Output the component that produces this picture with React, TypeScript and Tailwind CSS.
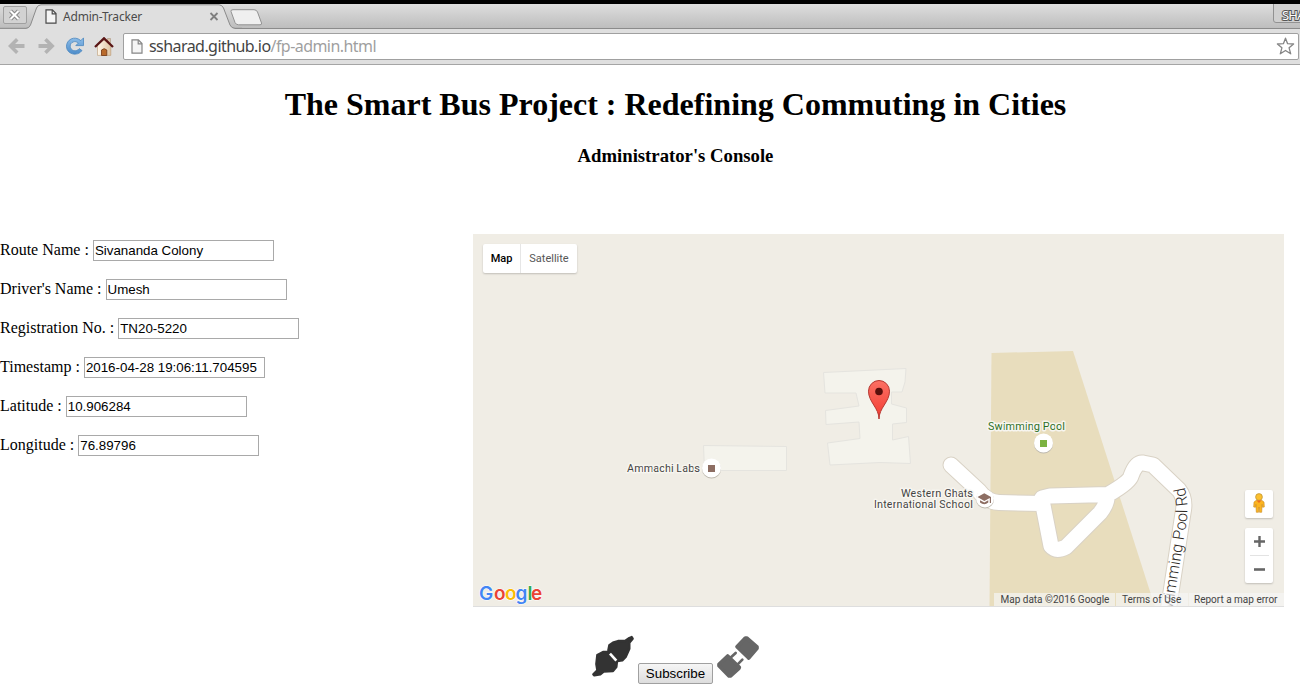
import React from "react";

const fields = [
  { label: "Route Name :", value: "Sivananda Colony" },
  { label: "Driver's Name :", value: "Umesh" },
  { label: "Registration No. :", value: "TN20-5220" },
  { label: "Timestamp :", value: "2016-04-28 19:06:11.704595" },
  { label: "Latitude :", value: "10.906284" },
  { label: "Longitude :", value: "76.89796" },
];

function PageIcon({ className, stroke }: { className: string; stroke: string }) {
  return (
    <svg className={className} viewBox="0 0 12 15" fill="none">
      <path d="M1 .9h6.4L11 4.6v9.5H1z" fill="#f5f5f5" stroke={stroke} strokeWidth="1.2" />
      <path d="M7.2 1v3.8H11" stroke={stroke} strokeWidth="1.2" />
    </svg>
  );
}

function TabStrip() {
  return (
    <div className="relative h-[25px] bg-gradient-to-b from-[#dedede] to-[#bcbcbc]">
      <svg className="absolute inset-0" width="1300" height="25" viewBox="0 4 1300 25">
        <path d="M0 28.5H1300" stroke="#8b8b8b" />
        <path
          d="M0 29V28.5H26Q29 28.5 30.5 25L36.5 8Q38 4.8 41 4.8H219Q222 4.8 223.5 8L230 25Q231.5 28.5 235 28.5V30H26Z"
          fill="#dfdfdf"
        />
        <path
          d="M0 28.3H26Q29 28.3 30.5 25L36.5 8Q38 4.8 41 4.8H219Q222 4.8 223.5 8L230 25Q231.5 28.3 235 28.3H242"
          fill="none"
          stroke="#8b8b8b"
        />
        <path
          d="M233 9.7H254Q256.5 9.7 257.5 12L261.5 23Q262 24.8 260 24.8H238.5Q236 24.8 235 22.5L231 11.5Q230.5 9.7 233 9.7Z"
          fill="#efefef"
          stroke="#929292"
        />
        <rect x="3.5" y="6.5" width="23" height="17" rx="1.5" fill="#d2d2d2" stroke="#a0a0a0" />
        <path d="M10.500 11l8 8m0-8l-8 8" stroke="#888" strokeWidth="4" />
        <path d="M10.500 11l8 8m0-8l-8 8" stroke="#fff" strokeWidth="2" />
        <path d="M1273.500 4V20Q1273.500 22.500 1276 22.500H1301V4" fill="#d0d0d0" stroke="#929292" />
      </svg>
      <div className="relative flex h-[25px] items-center font-['Noto_Sans','Open_Sans',sans-serif] text-[12px] text-[#4b4b4b]">
        <PageIcon className="ml-[45px] h-[15px] w-[12px]" stroke="#4a4a4a" />
        <span className="ml-[6px] w-[146px] text-[12px] tracking-[-0.2px]">Admin-Tracker</span>
        <svg className="h-[9px] w-[10px]" viewBox="0 0 10 9">
          <path d="M1.500 1l7 7m0-7l-7 7" stroke="#7f7f7f" strokeWidth="1.800" />
        </svg>
        <span className="mb-[3px] ml-auto w-[19px] overflow-hidden whitespace-nowrap pl-px text-[13px] leading-[18px] tracking-[-0.9px] text-white [-webkit-text-stroke:2px_#555] [paint-order:stroke_fill]">
          SHA
        </span>
      </div>
    </div>
  );
}

function Toolbar() {
  return (
    <div className="flex h-[36px] items-center border-b border-[#a5a5a5] bg-[#dfdfdf] pl-[7px] pr-px">
      <svg className="h-[19px] w-[112px] shrink-0" viewBox="7 37 112 19">
        <defs>
          <linearGradient id="reload" x2="0" y2="1">
            <stop stopColor="#8cbce8" />
            <stop offset="1" stopColor="#4e8dca" />
          </linearGradient>
          <linearGradient id="wall" x2="1" y2="0">
            <stop stopColor="#fff7ea" />
            <stop offset="1" stopColor="#dfc5a3" />
          </linearGradient>
        </defs>
        <path d="M8 46l8-8 2.500 2.500-3.500 3.500h9.500v4H15l3.500 3.500L16 54z" fill="#b3b3b3" />
        <path d="M54.700 46l-8-8-2.500 2.500 3.500 3.500h-9.200v4h9.200l-3.500 3.500 2.500 2.500z" fill="#b3b3b3" />
        <path
          d="M80.800 40.600C74.500 35 66 39.800 66.500 46.800C67 54.500 77.500 56.800 82 50.600L79.300 48.600C76.500 52.500 70.300 50.800 70.200 46.200C70.200 42 75.500 40 78.300 43.100L75.800 45.600H83.500V37.900Z"
          fill="url(#reload)"
          stroke="#4a86bf"
          strokeWidth=".8"
        />
        <path d="M107.500 38.500h3v6h-3z" fill="#d8c3aa" stroke="#a38a72" strokeWidth=".5" />
        <path d="M97.500 45l6.500-6 6.800 6v10.400H97.500z" fill="url(#wall)" stroke="#b99a75" strokeWidth=".6" />
        <path d="M101.500 55.500V50q2.700-2.700 5.300 0v5.500z" fill="#b96a2b" stroke="#713715" strokeWidth=".8" />
        <path d="M95 47l9-8.700 9 8.700" fill="none" stroke="#5a1616" strokeWidth="2.300" />
      </svg>
      <div className="ml-[4px] mt-[-1px] flex h-[27px] flex-1 items-center rounded-[2px] border border-[#a0a0a0] bg-white font-['Noto_Sans','Open_Sans',sans-serif] text-[16px] text-[#444]">
        <PageIcon className="ml-[7px] h-[15px] w-[12px]" stroke="#858585" />
        <span className="ml-[6px] whitespace-nowrap tracking-[-0.56px]">
          ssharad.github.io<span className="text-[#9f9f9f]">/fp-admin.html</span>
        </span>
        <svg className="ml-auto mr-[3px] h-[19px] w-[19px]" viewBox="0 0 19 19">
          <path
            d="M9.500 1.200l2.100 5.500 6 .3-4.500 3.800 1.600 6-5.200-3.300-5.200 3.300 1.600-6L1.400 7l6-.3z"
            fill="#fff"
            stroke="#858585"
            strokeWidth="1.300"
            strokeLinejoin="round"
          />
        </svg>
      </div>
    </div>
  );
}

const roads =
  "M951 465L979 491Q987 502 999 502.500L1042 503.500M1042 498L1050 496L1108 494.500Q1130 482 1131 476Q1136 462 1143 463L1153 465L1179 490Q1186 499 1183 513L1168 612M1042 500L1051 546Q1056 552 1066 547L1100 513Q1108 503 1107 495";

function MapDrawing() {
  return (
    <svg
      className="block h-[373px] w-[811px] font-['Roboto',sans-serif]"
      viewBox="473 234 811 373"
      fontSize="11"
      fill="#444"
    >
      <defs>
        <linearGradient id="pin" x2="0" y2="1">
          <stop stopColor="#fb7064" />
          <stop offset="1" stopColor="#f33b31" />
        </linearGradient>
        <path id="pool-road" d="M1166 650L1175 594L1185 532Q1190 508 1184.500 487" />
      </defs>
      <rect x="473" y="234" width="811" height="373" fill="#f0ede5" />
      <path d="M991.500 353L1073 351L1155 607H989.500z" fill="#e8ddbd" />
      <g fill="#f4f3ec" stroke="#e5e4df">
        <path d="M823.500 372.500L906 368.500L905 382L902 392H891.500V404L906.500 408V422.500L892.500 424V440L908.500 436.500L910.500 463.500L880 462.500L830 465L827.500 443L860 438.500L859 422L826 424.500L825.500 410.500L859 406L856 393H825z" />
        <path d="M703.500 445.500L786.500 446.500V470.500H704.500z" />
      </g>
      <g fill="none" strokeLinejoin="round" strokeLinecap="round">
        <path d={roads} stroke="#d9d2c5" strokeWidth="17" />
        <path d={roads} stroke="#fff" strokeWidth="15" />
      </g>
      <g stroke="#f7f5ef" strokeWidth="3" paintOrder="stroke" strokeLinejoin="round">
        <text x="627" y="472" textLength="73">Ammachi Labs</text>
        <text x="988" y="430" textLength="77" fill="#2d701e">Swimming Pool</text>
        <text x="901" y="497" textLength="72">Western Ghats</text>
        <text x="874" y="508" textLength="99">International School</text>
      </g>
      <text fontSize="16" fontWeight="300" textAnchor="end" fill="#2f2a26">
        <textPath href="#pool-road" startOffset="100%">Swimming Pool Rd</textPath>
      </text>
      <g fill="#bdb8ad">
        <circle cx="711.5" cy="469" r="9.5" />
        <circle cx="1043.5" cy="444" r="9.5" />
        <circle cx="985" cy="499.5" r="9" />
      </g>
      <g fill="#fff">
        <circle cx="711.5" cy="468" r="9.5" />
        <circle cx="1043.5" cy="443" r="9.5" />
        <circle cx="985" cy="498.5" r="9" />
      </g>
      <path d="M708 465h7v7h-7z" fill="#8d6e63" />
      <path d="M1040 440h7v7h-7z" fill="#7cb342" />
      <path d="M977.500 497l6.800-3.800 6.700 3.800v6h-1.200v-5l-5.500 3z" fill="#8d6e63" />
      <path d="M980 500.200l4.300 2.300 4-2.300v2.300q-4 3.500-8.300 0z" fill="#8d6e63" />
      <path
        d="M879 419C879 408 868.500 402 868.500 391.200A10.500 10.700 0 0 1 889.500 391.200C889.500 402 879 408 879 419Z"
        fill="url(#pin)"
        stroke="#b63630"
      />
      <circle cx="879" cy="391.500" r="3.800" fill="#590f0c" />
      <text
        x="479 494 505 515.5 527.5 531"
        y="600"
        fontFamily="Inter"
        fontSize="19"
        fontWeight="600"
        stroke="#fff"
        strokeWidth="1"
        paintOrder="stroke"
      >
        <tspan fill="#4285f4">G</tspan>
        <tspan fill="#ea4335">o</tspan>
        <tspan fill="#fbbc05">o</tspan>
        <tspan fill="#4285f4">g</tspan>
        <tspan fill="#34a853">l</tspan>
        <tspan fill="#ea4335">e</tspan>
      </text>
      <path d="M473 606.500H1284" stroke="#dedede" />
    </svg>
  );
}

function MapPanel() {
  return (
    <section className="relative h-[373px] w-[811px] overflow-hidden font-['Roboto',sans-serif]">
      <MapDrawing />
      <div className="absolute left-[10px] top-[10px] flex h-[29px] rounded-[2px] bg-white text-[11px] leading-[29px] shadow-[0_1px_2px_#0003]">
        <button className="w-[38px] border-r border-[#e6e6e6] font-medium text-black">Map</button>
        <button className="w-[56px] text-[#565656]">Satellite</button>
      </div>
      <div className="absolute right-[11px] top-[256px] flex w-[28px] flex-col gap-[10px]">
        <button className="flex h-[28px] items-center justify-center rounded-[2px] bg-white shadow-[0_1px_2px_#0003]">
          <svg className="mb-[2px] h-[20px] w-[12px]" viewBox="0 0 12 20">
            <path
              d="M3 7.500h6l2 1.500.3 5-1.700.3-.5-3-.4 8H6.500L6 14l-.5 5.300H3.300l-.4-8-.5 3L.7 14 1 9z"
              fill="#fbb420"
              stroke="#c98c23"
              strokeWidth=".6"
            />
            <circle cx="6" cy="4" r="3.400" fill="#fcc02e" stroke="#b99036" strokeWidth=".7" />
            <path d="M3.500 7.500h5L6 10z" fill="#ef6c20" />
          </svg>
        </button>
        <div className="flex h-[55px] flex-col items-center rounded-[2px] bg-white shadow-[0_1px_2px_#0003]">
          <button className="flex h-[27px] items-center justify-center">
            <svg className="h-[11px] w-[11px]" viewBox="0 0 11 11">
              <path d="M5.500 0v11M0 5.500h11" stroke="#666" strokeWidth="2.400" />
            </svg>
          </button>
          <span className="h-px w-[19px] bg-[#e3e3e3]" />
          <button className="flex h-[27px] items-center justify-center">
            <svg className="h-[3px] w-[11px]" viewBox="0 0 11 3">
              <path d="M0 1.500h11" stroke="#666" strokeWidth="2.600" />
            </svg>
          </button>
        </div>
      </div>
      <div className="absolute bottom-[1px] right-0 flex h-[13px] gap-px whitespace-nowrap text-[10px] leading-[13px] text-[#444]">
        <span className="w-[121px] bg-[#f5f5f5]/70 pl-[6.500px]">Map data ©2016 Google</span>
        <span className="w-[72px] bg-[#f5f5f5]/70 pl-[6px]">Terms of Use</span>
        <span className="w-[95px] bg-[#f5f5f5]/70 pl-[5px]">Report a map error</span>
      </div>
    </section>
  );
}

function ConnectedPlug() {
  return (
    <svg className="h-[43px] w-[43px] overflow-visible" viewBox="13 14 129 129">
      <g fill="#333" stroke="#333" strokeWidth="7" strokeLinejoin="round">
        <path d="M29 71L46 62L61 62L88 90L86 107L76 119L48 121L38 129L20 132L17 129L29 117L26 98Z" />
        <path d="M62 57L65 42L78 33L91 29H112L125 20L132 17L135 22L125 34L125 52L119 66L114 77L104 87L89 89Z" />
      </g>
      <path d="M67 67L86 88" stroke="#fff" strokeWidth="8" />
    </svg>
  );
}

function OpenPlug() {
  return (
    <svg className="h-[43px] w-[43px] overflow-visible" viewBox="9 12 129 129">
      <g fill="#666" stroke="#666" strokeWidth="11" strokeLinejoin="round">
        <path d="M97 18H101L132 45V49L107 78L72 44Z" />
        <path d="M18 97L44 72L79 106L77 110L52 132H48L18 101Z" />
      </g>
      <path d="M54 76L68 63M74 97L88 83" stroke="#666" strokeWidth="8" strokeLinecap="round" />
    </svg>
  );
}

export default function App() {
  return (
    <div className="h-[690px] w-[1300px] overflow-hidden bg-white font-['Liberation_Serif',serif] text-black">
      <header className="border-t-4 border-black">
        <TabStrip />
        <Toolbar />
      </header>
      <main className="w-[1351px]">
        <h1 className="pt-[21px] text-center text-[32px] font-bold leading-[37px]">
          The Smart Bus Project : Redefining Commuting in Cities
        </h1>
        <h3 className="mt-[22px] text-center text-[18.72px] font-bold leading-[21px]">Administrator's Console</h3>
        <div className="mt-[68px] flex">
          <form className="flex w-[473px] flex-col gap-[18px] pt-[6px]">
            {fields.map((field) => (
              <label key={field.label} className="flex h-[21px] gap-1 text-[16px] leading-[19px]">
                <span>{field.label}</span>
                <input
                  className="h-[21px] w-[181px] border border-[#a9a9a9] px-px pb-px font-['Liberation_Sans',sans-serif] text-[13.333px]"
                  defaultValue={field.value}
                />
              </label>
            ))}
          </form>
          <MapPanel />
        </div>
        <div className="mt-[29px] flex items-start justify-center gap-[3px]">
          <ConnectedPlug />
          <button className="mt-[27px] h-[21px] w-[75px] rounded-[2px] border border-[#a0a0a0] bg-gradient-to-b from-[#f6f6f6] to-[#dddddd] font-['Liberation_Sans',sans-serif] text-[13.333px] leading-[19px]">
            Subscribe
          </button>
          <OpenPlug />
        </div>
      </main>
    </div>
  );
}
